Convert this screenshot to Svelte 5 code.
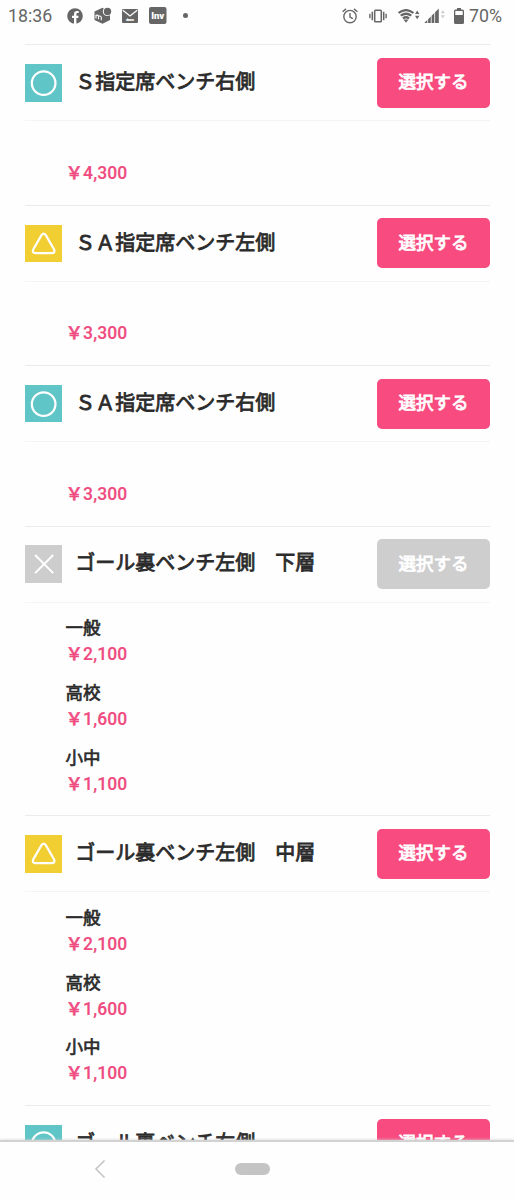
<script lang="ts">
  type Mark = 'circle' | 'triangle' | 'cross';
  interface Price { label: string; amount: string }
  interface Seat { name: string; mark: Mark; prices: Price[] }

  const tiers: Price[] = [
    { label: '一般', amount: '2,100' },
    { label: '高校', amount: '1,600' },
    { label: '小中', amount: '1,100' },
  ];
  const seats: Seat[] = [
    { name: 'Ｓ指定席ベンチ右側', mark: 'circle', prices: [{ label: '', amount: '4,300' }] },
    { name: 'ＳＡ指定席ベンチ左側', mark: 'triangle', prices: [{ label: '', amount: '3,300' }] },
    { name: 'ＳＡ指定席ベンチ右側', mark: 'circle', prices: [{ label: '', amount: '3,300' }] },
    { name: 'ゴール裏ベンチ左側　下層', mark: 'cross', prices: tiers },
    { name: 'ゴール裏ベンチ左側　中層', mark: 'triangle', prices: tiers },
    { name: 'ゴール裏ベンチ右側', mark: 'circle', prices: [] },
  ];
</script>

<div class="screen">
  <header class="status">
    <span class="time">18:36</span>
    <svg class="fb" width="16" height="16" viewBox="0 0 16 16">
      <circle cx="8" cy="8" r="7.8" fill="#666" />
      <path d="M7 16V10H5V7.700h2V6.200C7 4 8.200 3 10 3l1.700.1v2h-1c-1 0-1.300.5-1.300 1.200v1.400h2.200L11.200 10H9.400v6z" fill="#fff" />
    </svg>
    <svg class="cube" width="18" height="17" viewBox="0 0 18 17">
      <path d="M.5 4.500 8.500.7 16 5v8L8.500 16.700.5 13z" fill="#666" />
      <circle cx="13.300" cy="4.500" r="4.500" fill="#fff" />
      <circle cx="13.500" cy="4.500" r="3.700" fill="#666" />
      <path d="M2 11.500V7.800M2 9c0-1.500 2.500-1 2.500.2v3M4.500 9.700c.3-1.300 2.800-.8 2.800.7v2.900" fill="none" stroke="#fff" stroke-width="1.100" />
    </svg>
    <svg class="mail" width="16" height="14" viewBox="0 0 16 14">
      <rect width="16" height="14" rx="1" fill="#666" />
      <path d="M.8 1.300 8 7l7.200-5.700" fill="none" stroke="#fff" stroke-width="1.300" />
      <text x="8" y="12.300" text-anchor="middle" font-size="3.500" textLength="8" font-weight="700" fill="#fff">docomo</text>
    </svg>
    <svg class="inv" width="18" height="17" viewBox="0 0 18 17">
      <rect width="17.500" height="17" rx="2" fill="#666" />
      <text x="2.200" y="12" font-size="9.500" font-weight="900" textLength="13" fill="#fff">Inv</text>
    </svg>
    <i class="dot"></i>
    <span class="grow"></span>
    <svg class="alarm" width="16" height="16" viewBox="0 0 16 16" fill="none" stroke="#666" stroke-width="1.400">
      <circle cx="8" cy="8.600" r="6.200" />
      <path d="M8 5v4l2.800 1.600M.6 3.800 4 .9M15.400 3.800 12 .9" />
    </svg>
    <svg class="vibe" width="18" height="14" viewBox="0 0 18 14" fill="none" stroke="#666">
      <rect x="5.700" y="1.300" width="6.600" height="11.400" rx=".8" stroke-width="1.500" />
      <path d="M3.300 2.800v8.400M14.700 2.800v8.400" stroke-width="1.500" />
      <path d="M.9 4.700v4.600M17.100 4.700v4.600" stroke-width="1.400" />
    </svg>
    <svg class="wifi" width="22" height="14" viewBox="0 0 22 14" fill="none" stroke="#666">
      <path d="M.5 4q7.500-5.800 15 0M2.700 6.700q5.300-3.900 10.600 0M4.900 9.400q3.100-2.300 6.200 0" stroke-width="2.200" />
      <path d="M5.500 10.500h5L8 13.800z" fill="#666" stroke="none" />
      <path d="m17 5 2.200-3.500L21.400 5zM17 6.700h4.400l-2.200 3.500z" fill="#666" stroke="none" />
    </svg>
    <svg class="signal" width="22" height="15" viewBox="0 0 22 15" fill="#666">
      <path d="M.2 15 3.300 12v3zM4.100 11.200l2.700-2.700V15H4.100zM7.600 7.700l2.700-2.700V15H7.600zM11.100 4.200l3.700-3.700V15h-3.700z" />
      <path d="m16.800 5.200 2-3 2 3zM16.800 7.200h4l-2 3z" fill="#ccc" />
    </svg>
    <svg class="battery" width="10" height="16" viewBox="0 0 10 16">
      <path d="M3 0h4v1.500h1.500Q10 1.500 10 3v11.500Q10 16 8.500 16h-7Q0 16 0 14.500V3q0-1.500 1.500-1.500H3z" fill="#666" />
      <rect x="1.300" y="3" width="7.400" height="4" fill="#fff" />
    </svg>
    <span class="level">70%</span>
  </header>

  <main>
    {#each seats as seat}
      <section>
        <div class="head">
          <svg class="mark {seat.mark}" viewBox="0 0 37 37">
            {#if seat.mark === 'circle'}
              <circle cx="18.500" cy="19" r="11.700" stroke-width="2.200" />
            {:else if seat.mark === 'triangle'}
              <path d="M16.500 9.900Q18.500 7.300 20.500 9.900L29 24.600Q30 27.700 27 27.900H10Q7 27.700 8 24.600Z" stroke-width="2.200" />
            {:else}
              <path d="m10 9.900 18 18M28 9.900l-18 18" stroke-width="2" />
            {/if}
          </svg>
          <h2>{seat.name}</h2>
          <button disabled={seat.mark === 'cross'}>選択する</button>
        </div>
        {#if seat.prices.length}
          <dl>
            {#each seat.prices as price}
              <div class="price">
                <dt>{price.label}</dt>
                <dd><span class="yen">￥</span>{price.amount}</dd>
              </div>
            {/each}
          </dl>
        {/if}
      </section>
    {/each}
  </main>

  <nav>
    <svg class="back" width="12" height="20" viewBox="0 0 12 20"><path d="M10.500 1.500 2 10l8.500 8.500" fill="none" stroke="#c4c4c4" stroke-width="1.600" /></svg>
    <span class="home"></span>
  </nav>
</div>

<style>
  :global(body) { margin: 0; background: #fefefe; }
  .screen {
    height: 1200px;
    display: flex;
    flex-direction: column;
    overflow: hidden;
    background: #fefefe;
    color: #2b2b2b;
    font-family: Roboto, "Noto Sans CJK JP", sans-serif;
  }
  .status {
    flex: none;
    height: 44.400px;
    padding: 0 12px 13.400px 8px;
    box-sizing: border-box;
    display: flex;
    align-items: center;
    color: #666;
    font-size: 17.800px;
    line-height: 31px;
  }
  .status svg { flex: none; }
  .time { width: 59px; }
  .cube { margin-left: 11px; }
  .mail { margin-left: 10px; }
  .inv { margin-left: 11px; }
  .dot { width: 5px; height: 5px; margin-left: 16px; border-radius: 50%; background: #666; }
  .grow { flex: 1; }
  .vibe { margin-left: 11px; }
  .wifi { margin-left: 11px; }
  .signal { margin-left: 4px; }
  .battery { margin-left: 8px; }
  .level { margin-left: 5px; }
  main { flex: 1; min-height: 0; overflow: hidden; padding: 0 24px 0 25px; }
  section { border-top: 1px solid #ebebeb; }
  .head {
    height: 75px;
    display: flex;
    align-items: center;
    border-bottom: 1px solid #f4f4f4;
  }
  .mark { flex: none; width: 37.300px; height: 37.300px; fill: none; stroke: #fff; }
  .circle { background: #60c5c7; }
  .triangle { background: #f1ce31; }
  .cross { background: #cdcdcd; }
  h2 {
    flex: 1;
    margin: 0 0 1.500px 13px;
    font-size: 20px;
    line-height: 30px;
    font-weight: 400;
    -webkit-text-stroke: .8px;
    white-space: nowrap;
  }
  button {
    width: 113px;
    height: 50px;
    padding: 0 0 4px;
    border: 0;
    border-radius: 5px;
    background: #f84b80;
    color: #fff;
    font: 400 17.500px Roboto, "Noto Sans CJK JP", sans-serif;
    -webkit-text-stroke: .8px;
  }
  button:disabled { background: #cecece; }
  dl { margin: 0; padding: 12.400px 0 6.200px 40.500px; font-size: 17.500px; line-height: 26px; }
  .price { padding-bottom: 12.800px; }
  dt { height: 26px; -webkit-text-stroke: .7px; }
  dd { margin: 0; height: 26px; color: #ef4b80; font-weight: 500; letter-spacing: .1px; -webkit-text-stroke: .15px; }
  .yen { -webkit-text-stroke: .5px; }
  nav {
    flex: none;
    position: relative;
    height: 60.500px;
    box-sizing: border-box;
    padding: 0 0 4px 94px;
    border-top: 2px solid #d2d2d2;
    box-shadow: 0 0 3px #d2d2d2;
    background: #fefefe;
    display: flex;
    align-items: center;
  }
  .home { width: 35px; height: 12.500px; margin-left: 128.500px; border-radius: 7px; background: #c4c4c4; }
</style>
